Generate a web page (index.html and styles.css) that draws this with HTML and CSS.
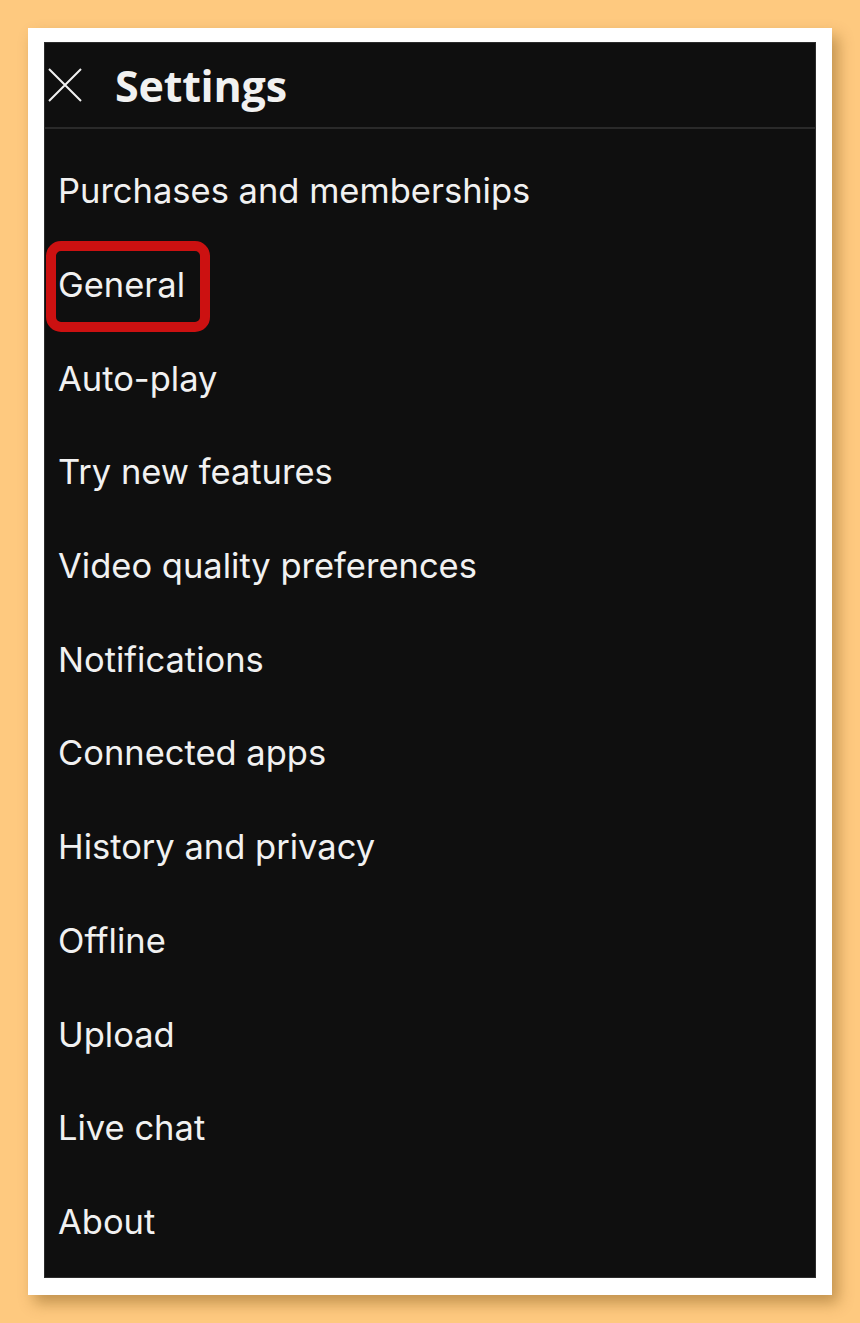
FILE: index.html
```html
<!DOCTYPE html>
<html>
<head>
  <title>Settings</title>
  <link rel="stylesheet" href="styles.css">
</head>
<body>
  <div class="frame">
    <div class="panel">
      <header class="topbar">
        <svg class="close" xmlns="http://www.w3.org/2000/svg" viewBox="0 0 34 34" fill="none" stroke="currentColor" stroke-width="2">
          <path d="M1 1L33 33M33 1L1 33"></path>
        </svg>
        <h1>Settings</h1>
      </header>

      <ul class="menu">
        <li>Purchases and memberships</li>
        <li class="marked">General</li>
        <li>Auto-play</li>
        <li>Try new features</li>
        <li>Video quality preferences</li>
        <li>Notifications</li>
        <li>Connected apps</li>
        <li>History and privacy</li>
        <li>Offline</li>
        <li>Upload</li>
        <li>Live chat</li>
        <li>About</li>
      </ul>
    </div>
  </div>
</body>
</html>
```

FILE: styles.css
```css
:root {
  --page: #fec97f;
  --frame: #ffffff;
  --bg: #0f0f0f;
  --fg: #f1f1f1;
  --line: #2a2a2a;
  --mark: #cc1111;
}

html, body {
  margin: 0;
  background-color: var(--page);
}

body {
  padding: 28px;
  font-family: Inter, "Noto Sans", sans-serif;
}

.frame {
  width: 772px;
  padding: 14px 16px 17px 16px;
  background-color: var(--frame);
  box-shadow: 6px 8px 14px rgba(120, 80, 20, 0.45);
}

.panel {
  height: 1236px;
  background-color: var(--bg);
  color: var(--fg);
  border: 1px solid #2c2c2c;
  box-sizing: border-box;
}

.topbar {
  display: flex;
  align-items: center;
  height: 84px;
  padding-left: 3px;
  border-bottom: 2px solid var(--line);
}

.close {
  width: 34px;
  height: 34px;
  margin-right: 33px;
}

h1 {
  margin: 0;
  font-family: "Open Sans", sans-serif;
  font-weight: 700;
  font-size: 43px;
  letter-spacing: -0.2px;
}

.menu {
  list-style: none;
  margin: 0;
  padding: 15px 0 0 13px;
}

.menu li {
  position: relative;
  height: 93.7px;
  display: flex;
  align-items: center;
  font-size: 34.5px;
}

.menu li.marked:after {
  content: "";
  position: absolute;
  left: -12px;
  top: 3px;
  width: 144px;
  height: 71px;
  border: 10px solid var(--mark);
  border-radius: 15px;
}
```
